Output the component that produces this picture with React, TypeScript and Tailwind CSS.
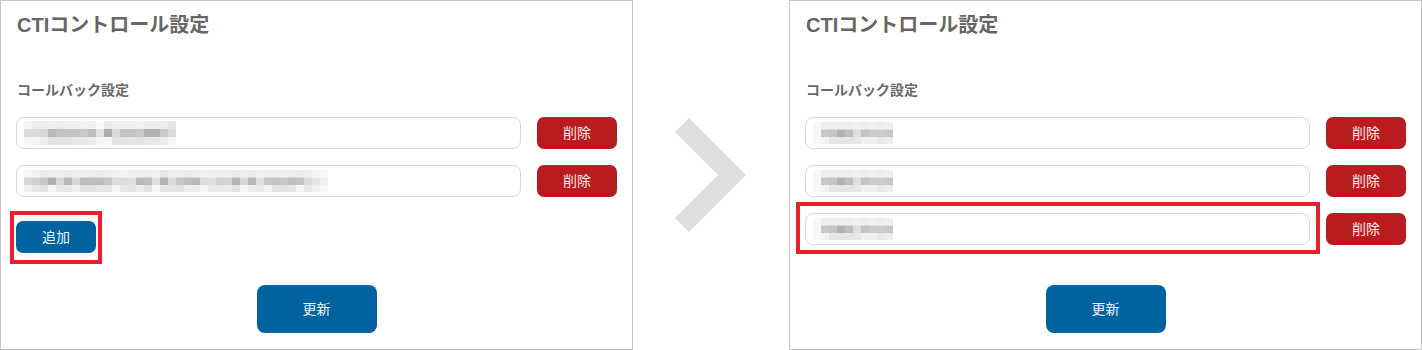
import React from "react";

type Mosaic = string[][];

const m1: Mosaic = [
  ["f5","ec","ec","f0","ec","f0","f0","f3","f0","fa","eb","f0","f0","f0","f3","ee","ee","ec","e6"],
  ["dc","dc","d6","b9","c4","c4","c6","ca","bd","e2","ad","dc","c2","c2","ca","b1","b3","cb","da"],
  ["f6","f3","ee","e3","e3","e3","e8","e8","eb","f6","f6","e3","e3","e6","e3","e8","e8","eb","f6"],
];

const m2: Mosaic = [
  ["f8","f3","ec","ee","f0","ec","ee","f0","ee","ec","ee","f3","f5","f0","ee","ee","f3","e6","f0","ee","ec","ee","f3","f0","ee","f0","ec","ee","ec","f3","ee","ee","f0","ee","ec","f0","f5","f8"],
  ["d8","d0","c8","b0","d8","b8","d8","bc","c0","bc","c8","dc","dc","e0","b8","c0","e0","b4","dc","c8","c0","b8","dc","e0","d0","d4","b4","d8","b8","e0","c8","c4","c8","c0","c4","dc","e4","f0"],
  ["f0","e6","e3","f5","e8","e8","f0","e3","e3","e6","e6","f5","e8","e3","ec","e3","f8","e6","e6","e3","ee","ec","f5","e8","e8","ec","e3","f5","ec","e8","f3","e3","e3","e6","f5","e8","f0","f8"],
];

const m3: Mosaic = [
  ["f8","ee","ee","ee","ee","f0","ee","f0","ee","f0"],
  ["f6","c8","c4","b4","bf","dc","c4","cc","cc","c8"],
  ["f8","f3","e6","e6","e6","e6","f0","f0","e8","ec"],
];

function MosaicSvg({ data, cellH = 7.5 }: { data: Mosaic; cellH?: number }) {
  const cols = data[0].length;
  return (
    <svg width={cols * 8} height={cellH * 3} viewBox={`0 0 ${cols * 8} ${cellH * 3}`} className="block">
      {data.map((row, r) =>
        row.map((c, i) => (
          <rect key={`${r}-${i}`} x={i * 8} y={r * cellH} width={8} height={cellH} fill={`#${c}${c}${c}`} />
        ))
      )}
    </svg>
  );
}

function Field({ data, highlight, cellH }: { data: Mosaic; highlight?: boolean; cellH?: number }) {
  return (
    <div className="relative flex-1">
      <div className="h-8 rounded-[8px] border border-[#d8d8d8] bg-white flex items-center pl-[7px]">
        <MosaicSvg data={data} cellH={cellH} />
      </div>
      {highlight && (
        <div className="absolute -left-[9px] -top-[11px] -right-[10px] -bottom-[9px] border-[4px] border-[#e6212c] pointer-events-none" />
      )}
    </div>
  );
}

function Row({ data, highlight, cellH }: { data: Mosaic; highlight?: boolean; cellH?: number }) {
  return (
    <div className="flex gap-4 h-8">
      <Field data={data} highlight={highlight} cellH={cellH} />
      <button className="w-20 h-8 rounded-[7px] bg-[#b91c1f] text-[14px] text-[#fbe9e9] leading-8">削除</button>
    </div>
  );
}

function Panel({ rows, showAdd, highlightLast }: { rows: { d: Mosaic; h?: number }[]; showAdd?: boolean; highlightLast?: boolean }) {
  return (
    <div className="w-[633px] h-[350px] shrink-0 border border-[#c6c6c6] bg-white px-[15px] pt-[10px] pb-[16px] flex flex-col">
      <div className="h-[28px] leading-[28px] text-[20px] font-bold text-[#666666] pl-[1px]">CTIコントロール設定</div>
      <div className="mt-[41px] h-[20px] leading-[20px] text-[14px] font-bold text-[#6a6a6a] pl-[1px]">コールバック設定</div>
      <div className="mt-[17px] flex flex-col gap-4">
        {rows.map((r, i) => (
          <Row key={i} data={r.d} cellH={r.h} highlight={highlightLast && i === rows.length - 1} />
        ))}
      </div>
      {showAdd && (
        <div className="mt-6 relative w-20">
          <button className="w-20 h-8 rounded-[7px] bg-[#00639f] text-[14px] text-[#eaf3f9] leading-8">追加</button>
          <div className="absolute -left-[6px] -top-[10px] -right-[6px] -bottom-[11px] border-[4px] border-[#e6212c] pointer-events-none" />
        </div>
      )}
      <button className="mt-auto self-center w-[120px] h-[48px] rounded-[8px] bg-[#00639f] text-[14px] text-[#eaf3f9]">更新</button>
    </div>
  );
}

export default function App() {
  return (
    <div className="w-[1422px] h-[350px] flex bg-white font-['Liberation_Sans','Noto_Sans_CJK_JP',sans-serif]">
      <Panel rows={[{ d: m1, h: 8 }, { d: m2, h: 7.5 }]} showAdd />
      <div className="w-[156px] shrink-0 flex items-center justify-center">
        <svg width="72" height="114" viewBox="0 0 72 114" className="block">
          <polygon points="14,0 71,57 14,114 0,100 43,57 0,14" fill="#dedede" />
        </svg>
      </div>
      <Panel rows={[{ d: m3, h: 7.5 }, { d: m3, h: 7.5 }, { d: m3, h: 7.5 }]} highlightLast />
    </div>
  );
}
